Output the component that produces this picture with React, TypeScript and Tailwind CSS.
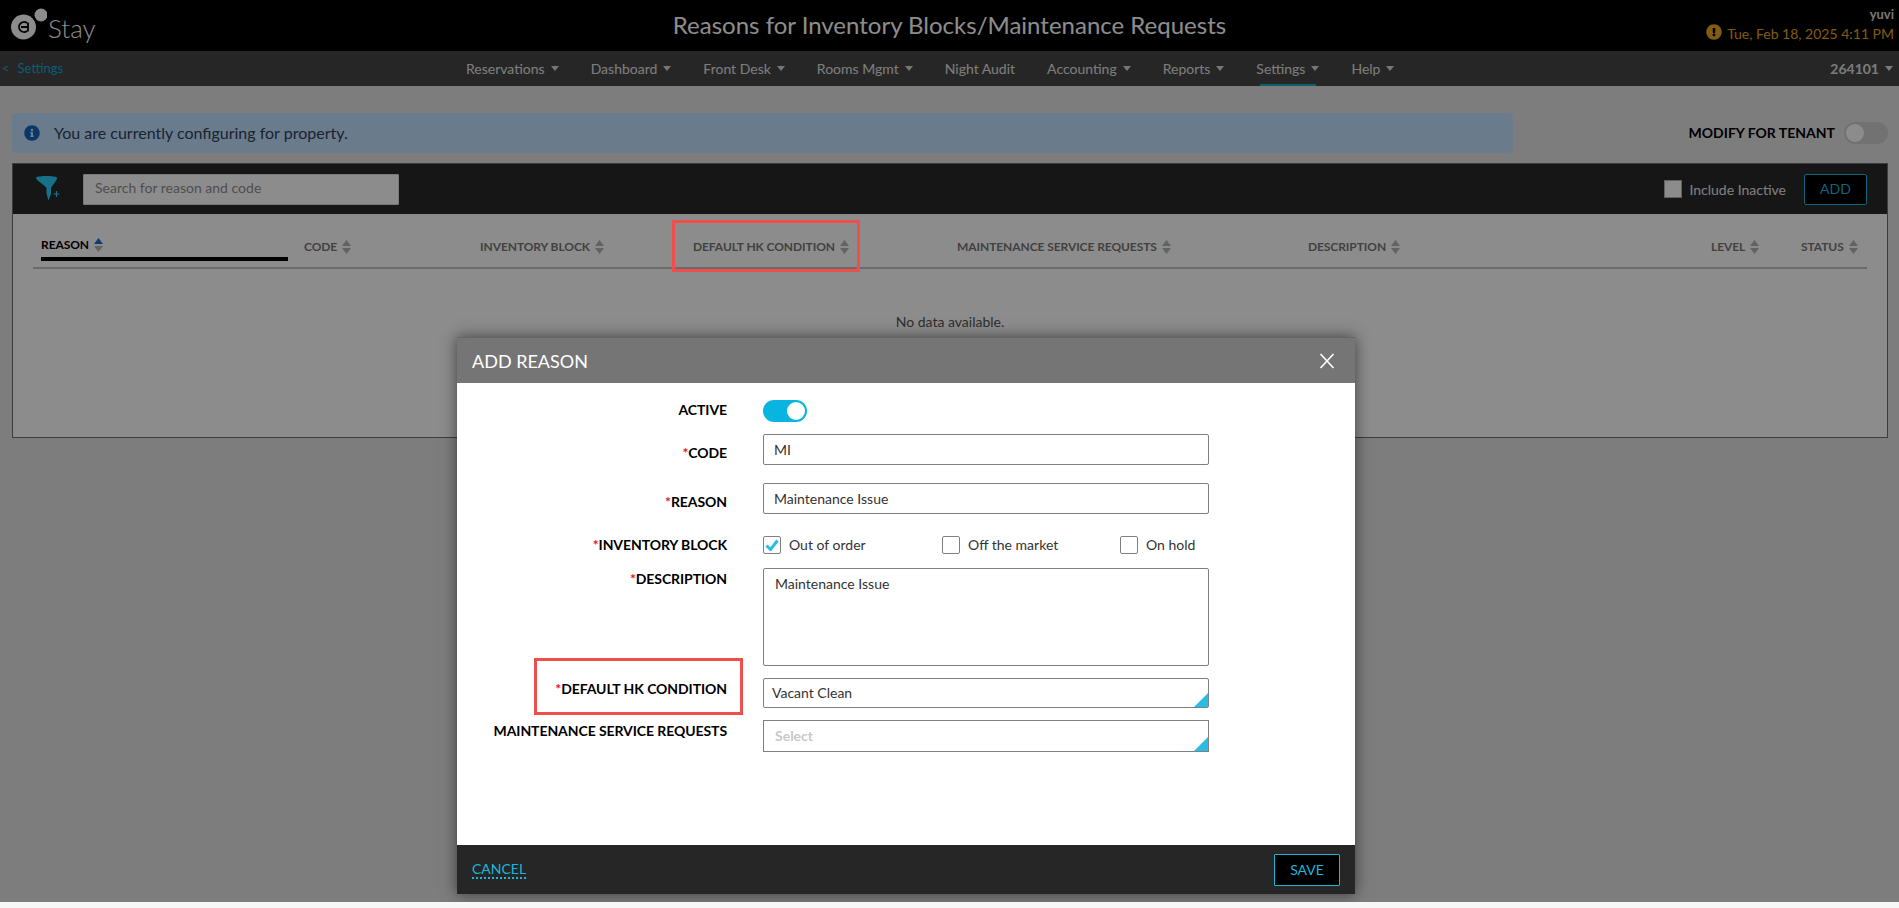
import { FaInfoCircle, FaExclamationCircle } from "react-icons/fa";

const navItems = [
  { label: "Reservations", caret: true },
  { label: "Dashboard", caret: true },
  { label: "Front Desk", caret: true },
  { label: "Rooms Mgmt", caret: true },
  { label: "Night Audit", caret: false },
  { label: "Accounting", caret: true },
  { label: "Reports", caret: true },
  { label: "Settings", caret: true, active: true },
  { label: "Help", caret: true },
];

const columns = [
  { label: "CODE", width: "w-[176px]" },
  { label: "INVENTORY BLOCK", width: "w-[213px]" },
  { label: "DEFAULT HK CONDITION", width: "w-[264px]" },
  { label: "MAINTENANCE SERVICE REQUESTS", width: "w-[351px]" },
  { label: "DESCRIPTION", width: "w-[403px]" },
  { label: "LEVEL", width: "w-[90px]" },
  { label: "STATUS", width: "w-[66px]" },
];

function Caret({ className }: { className?: string }) {
  return (
    <svg width="8" height="5" viewBox="0 0 8 5" className={className}>
      <path d="M0 0h8L4 5z" fill="currentColor" />
    </svg>
  );
}

function SortIcon({ active }: { active?: boolean }) {
  return (
    <svg width="9" height="14" viewBox="0 0 9 14" className="shrink-0">
      <path d="M4.5 0 9 6H0z" fill={active ? "#1f6fc4" : "#b4b4b4"} />
      <path d="M0 8h9l-4.500 6z" fill="#b4b4b4" />
    </svg>
  );
}

function Logo() {
  return (
    <svg width="38" height="34" viewBox="0 0 38 34" className="mb-[7px] shrink-0">
      <circle cx="14.500" cy="21" r="12.500" fill="#fff" />
      <circle cx="32" cy="9" r="6.500" fill="#fff" />
      <path d="M18 17a5 5 0 1 0 0 8" fill="none" stroke="#000" strokeWidth="1.800" />
      <path d="M12 21h7M19 16.500v9" fill="none" stroke="#000" strokeWidth="1.800" />
    </svg>
  );
}

function FilterIcon() {
  return (
    <svg width="24" height="26" viewBox="0 0 24 26" className="mb-[2px] shrink-0">
      <path d="M0 2.500C3 .500 18 .500 21 2.500c.500 3-4.500 7-6 10.500v6l-2.500 6.500-2-7v-5.500C8.500 9.500-.500 5.500 0 2.500z" fill="#2ad0fa" />
      <path d="M17.500 19h6M20.500 16v6" stroke="#2ad0fa" strokeWidth="1.200" fill="none" />
    </svg>
  );
}

function Corner() {
  return (
    <span className="absolute right-0 bottom-0 h-[14px] w-[14px] bg-[#29bde6] [clip-path:polygon(100%_0,100%_100%,0_100%)]" />
  );
}

function Row({
  label,
  required,
  labelClass,
  className,
  children,
}: {
  label: string;
  required?: boolean;
  labelClass?: string;
  className?: string;
  children: React.ReactNode;
}) {
  return (
    <div className={`flex ${className ?? ""}`}>
      <label className={`w-[270px] text-right text-sm leading-[18px] font-bold tracking-[-0.08px] text-black ${labelClass ?? ""}`}>
        {required && <span className="text-[#e8111a]">*</span>}
        {label}
      </label>
      <div className="ml-[36px] w-[446px]">{children}</div>
    </div>
  );
}

function CheckItem({ label, checked, className }: { label: string; checked?: boolean; className?: string }) {
  return (
    <div className={`flex items-center ${className ?? ""}`}>
      <span className="flex h-[18px] w-[18px] items-center justify-center rounded-[2px] border border-[#808080] bg-white">
        {checked && (
          <svg width="14" height="12" viewBox="0 0 14 12">
            <path d="M1.500 6.500 5.500 10.500 12.500 1.500" fill="none" stroke="#29bde6" strokeWidth="3" />
          </svg>
        )}
      </span>
      <span className="ml-2 text-sm leading-[18px] text-[#333]">{label}</span>
    </div>
  );
}

export default function App() {
  return (
    <div className="h-[908px] overflow-hidden bg-[#f7f7f7] font-['Lato',sans-serif]">
      <div className="relative h-[902px] overflow-hidden bg-[#e4e4e4]">
        <header className="flex h-[51px] items-center bg-black">
          <div className="flex w-[400px] items-center pl-[9px] pt-[2px]">
            <Logo />
            <span className="ml-[1px] mt-[2px] text-[26px] leading-none font-light text-white">Stay</span>
          </div>
          <h1 className="flex-1 pb-[1px] text-center text-2xl font-normal text-white">
            Reasons for Inventory Blocks/Maintenance Requests
          </h1>
          <div className="flex w-[400px] flex-col items-end pr-[5px] pb-[1px]">
            <span className="text-[13px] leading-[16px] font-bold text-[#d8d8d8]">yuvi</span>
            <div className="mt-[2px] flex items-center">
              <FaExclamationCircle className="mb-1 h-4 w-4 text-[#e8a820]" />
              <span className="ml-[5px] text-sm leading-[20px] text-[#e8a820]">Tue, Feb 18, 2025 4:11 PM</span>
            </div>
          </div>
        </header>

        <nav className="flex h-[35px] items-center bg-[#464646]">
          <a className="flex w-[466px] items-center pt-[1px] pl-[2px] text-[13px] text-[#13a9d5]">
            <span>&lt;</span>
            <span className="ml-[8px]">Settings</span>
          </a>
          <div className="flex h-full gap-[32px]">
            {navItems.map((item) => (
              <div key={item.label} className="relative flex items-center text-sm text-[#e4e4e4]">
                <span>{item.label}</span>
                {item.caret && <Caret className="ml-[6px] text-[#d8d8d8]" />}
                {item.active && <span className="absolute bottom-0 left-[4px] h-[2px] w-[56px] bg-[#1fa8cc]" />}
              </div>
            ))}
          </div>
          <div className="ml-auto flex items-center pr-[6px]">
            <span className="text-sm font-bold text-[#e0e0e0]">264101</span>
            <Caret className="ml-[6px] text-[#e0e0e0]" />
          </div>
        </nav>

        <main className="px-3 pt-[27px] pr-[11px]">
          <div className="flex items-center">
            <div className="flex h-10 w-[1501px] items-center rounded-[4px] bg-[#c1e0ff] pl-3">
              <FaInfoCircle className="h-4 w-4 text-[#1565b8]" />
              <span className="ml-[14px] text-base text-[#333e5c]">You are currently configuring for property.</span>
            </div>
            <span className="ml-auto text-sm font-bold text-black">MODIFY FOR TENANT</span>
            <span className="ml-[9px] flex h-[22px] w-11 items-center rounded-full bg-[#cfcfcf]">
              <span className="ml-[2px] h-[18px] w-[18px] rounded-full bg-white" />
            </span>
          </div>

          <section className="mt-[10px] h-[275px] border border-[#6e6e6e] bg-white">
            <div className="flex h-[50px] items-center bg-[#282828] pr-[20px] pl-[23px]">
              <FilterIcon />
              <input
                placeholder="Search for reason and code"
                className="ml-[23px] h-[31px] w-[316px] rounded-[1px] border border-[#ddd] bg-white px-[11px] pb-[4px] text-sm text-[#333] placeholder:text-[#8f8f8f]"
                readOnly
              />
              <span className="ml-auto h-[18px] w-[18px] border border-[#b0b0b0] bg-white" />
              <span className="ml-[7px] pt-[1px] text-sm text-[#e8e8e8]">Include Inactive</span>
              <button className="ml-[18px] h-[31px] w-[63px] rounded-[2px] border border-[#1ab6dc] bg-black text-sm text-[#1ab6dc]">
                ADD
              </button>
            </div>
            <div className="mx-5 flex h-[55px] border-b-2 border-[#c4c4c4] pl-2 text-xs font-bold tracking-[-0.08px] text-[#777]">
              <div className="relative h-full w-[263px] shrink-0">
                <div className="flex items-center gap-[5px] pt-[23px] text-black">
                  REASON
                  <SortIcon active />
                </div>
                <span className="absolute bottom-[6px] left-0 h-1 w-[247px] bg-black" />
              </div>
              {columns.map((col) => (
                <div key={col.label} className={`flex h-full shrink-0 items-center gap-[5px] pt-[12px] ${col.width}`}>
                  {col.label}
                  <SortIcon />
                </div>
              ))}
            </div>
            <p className="pt-[43px] text-center text-sm text-[#555]">No data available.</p>
          </section>
        </main>

        {/* backdrop */}
        <div className="absolute inset-0 bg-black/45" />

        <div className="absolute top-[337px] left-[457px] flex h-[557px] w-[898px] flex-col shadow-[0_0_14px_rgba(0,0,0,0.55)]">
          <div className="flex h-[46px] items-center justify-between border-t border-[#666] bg-[#757575] pr-[20px] pl-[15px]">
            <span className="text-lg text-white">ADD REASON</span>
            <svg width="16" height="16" viewBox="0 0 16 16">
              <path d="M1.500 1 14.500 15M14.500 1 1.500 15" stroke="#fff" strokeWidth="1.600" fill="none" />
            </svg>
          </div>

          <div className="flex-1 bg-white pt-[17px]">
            <Row label="ACTIVE" labelClass="pt-[1px]">
              <span className="flex h-[22px] w-11 items-center justify-end rounded-full bg-[#08b5e0]">
                <span className="mr-[2px] h-[18px] w-[18px] rounded-full bg-white" />
              </span>
            </Row>
            <Row label="CODE" required className="mt-3" labelClass="pt-[10px]">
              <input
                defaultValue="MI"
                className="h-[31px] w-full rounded-[2px] border border-[#808080] px-[10px] text-sm text-[#333]"
              />
            </Row>
            <Row label="REASON" required className="mt-[18px]" labelClass="pt-[10px]">
              <input
                defaultValue="Maintenance Issue"
                className="h-[31px] w-full rounded-[2px] border border-[#808080] px-[10px] text-sm text-[#333]"
              />
            </Row>
            <Row label="INVENTORY BLOCK" required className="mt-[22px]">
              <div className="flex">
                <CheckItem label="Out of order" checked className="w-[179px]" />
                <CheckItem label="Off the market" className="w-[178px]" />
                <CheckItem label="On hold" />
              </div>
            </Row>
            <Row label="DESCRIPTION" required className="mt-[14px]" labelClass="pt-[2px]">
              <textarea
                defaultValue="Maintenance Issue"
                className="block h-[98px] w-full resize-none rounded-[2px] border border-[#808080] px-[11px] py-[5px] text-sm text-[#333]"
              />
            </Row>
            <Row label="DEFAULT HK CONDITION" required className="mt-3" labelClass="pt-[2px]">
              <div className="relative flex h-[30px] items-center rounded-[2px] border border-[#808080] pl-[8px] text-sm text-[#333]">
                Vacant Clean
                <Corner />
              </div>
            </Row>
            <Row label="MAINTENANCE SERVICE REQUESTS" className="mt-3" labelClass="pt-[2px]">
              <div className="relative flex h-[32px] items-center border border-[#808080] pl-[11px] text-sm font-bold text-[#c8c8c8]">
                Select
                <Corner />
              </div>
            </Row>
          </div>

          <div className="flex h-[49px] items-center justify-between bg-[#262626] pr-[15px] pl-[15px]">
            <a className="border-b-2 border-dotted border-[#1ab6dc] text-sm leading-[17px] text-[#1ab6dc]">CANCEL</a>
            <button className="h-8 w-[66px] rounded-[1px] border border-[#1ab6dc] bg-black text-sm text-[#1ab6dc]">
              SAVE
            </button>
          </div>
        </div>

        {/* red annotation boxes */}
        <div className="absolute top-[220px] left-[672px] h-[52px] w-[188px] border-[3px] border-[#ef4f4a]" />
        <div className="absolute top-[658px] left-[534px] h-[57px] w-[209px] border-[3px] border-[#ef4f4a]" />
      </div>
    </div>
  );
}
